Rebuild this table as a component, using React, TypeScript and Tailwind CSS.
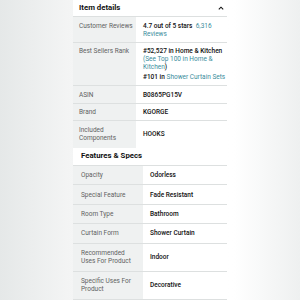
import React from "react";

const font = { fontFamily: 'Roboto, "Liberation Sans", Arial, sans-serif' };

function Row({ label, children, h, labelW, pl = "pl-[6px]", vpl = "pl-[7px]", border = true, center = true }: any) {
  return (
    <div className={`flex ${border ? "border-b border-[#dde0e0]" : ""}`} style={{ height: h }}>
      <div
        className={`${labelW} shrink-0 bg-[#eff1f1] flex ${center ? "items-center" : "items-start pt-[5px]"} ${pl} pr-[1px] text-[6.5px] leading-[8.2px] text-[#5f6262]`}
      >
        <div>{label}</div>
      </div>
      <div className={`flex-1 bg-white flex ${center ? "items-center" : "items-start pt-[5px]"} ${vpl} pr-[1px] text-[6.5px] leading-[8.2px] text-[#111] font-medium`}>
        <div>{children}</div>
      </div>
    </div>
  );
}

export default function App() {
  return (
    <div
      className="w-[300px] h-[300px] overflow-hidden flex justify-center bg-[linear-gradient(90deg,#e5e8e8_0%,#f3f4f4_22%,#fdfdfd_50%,#ffffff_78%,#eef0f0_100%)]"
      style={font}
    >
      <div className="w-[154px] flex flex-col">
        <div className="h-[17px] bg-white border-b border-[#dde0e0] flex items-center justify-between pl-[6px] pr-[3px]">
          <span className="text-[7.8px] font-bold text-[#111]">Item details</span>
          <svg width="6" height="4" viewBox="0 0 6 4" className="mt-[1px]">
            <path d="M0.8 3.4 L3 1.2 L5.2 3.4" fill="none" stroke="#111" strokeWidth="1.1" />
          </svg>
        </div>
        <Row label="Customer Reviews" h={27} labelW="w-[63px]" center={false}>
          <div>
            4.7 out of 5 stars{" "}
            <span className="text-[#3a8d9c] font-normal">&nbsp;6,316 Reviews</span>
          </div>
        </Row>
        <div className="flex border-b border-[#dde0e0] h-[45px]">
          <div className="w-[63px] shrink-0 bg-[#eff1f1] pt-[4px] pl-[6px] text-[6.5px] leading-[8.2px] text-[#5f6262]">
            Best Sellers Rank
          </div>
          <div className="flex-1 bg-white pt-[4px] pl-[7px] pr-[1px] text-[6.5px] leading-[8.2px] text-[#111] font-medium">
            <div>
              #52,527 in Home &amp; Kitchen <span className="font-normal text-[#3a8d9c]">(See Top 100 in Home &amp; Kitchen</span>)
            </div>
            <div className="mt-[2px] whitespace-nowrap">
              #101 in <span className="font-normal text-[#3a8d9c]">Shower Curtain Sets</span>
            </div>
          </div>
        </div>
        <Row label="ASIN" h={18} labelW="w-[63px]">B0865PG15V</Row>
        <Row label="Brand" h={18} labelW="w-[63px]">KGORGE</Row>
        <Row label={<span>Included<br />Components</span>} h={27} labelW="w-[63px]" border={false}>HOOKS</Row>
        <div className="h-[19px] bg-white border-b border-[#dde0e0] flex items-center pl-[8px]">
          <span className="text-[7.8px] font-bold text-[#111]">Features &amp; Specs</span>
        </div>
        <Row label="Opacity" h={20} labelW="w-[70px]" pl="pl-[8px]">Odorless</Row>
        <Row label="Special Feature" h={20} labelW="w-[70px]" pl="pl-[8px]">Fade Resistant</Row>
        <Row label="Room Type" h={20} labelW="w-[70px]" pl="pl-[8px]">Bathroom</Row>
        <Row label="Curtain Form" h={20} labelW="w-[70px]" pl="pl-[8px]">Shower Curtain</Row>
        <Row label={<span>Recommended<br />Uses For Product</span>} h={29} labelW="w-[70px]" pl="pl-[8px]">Indoor</Row>
        <Row label={<span>Specific Uses For<br />Product</span>} h={29} labelW="w-[70px]" pl="pl-[8px]">Decorative</Row>
      </div>
    </div>
  );
}
